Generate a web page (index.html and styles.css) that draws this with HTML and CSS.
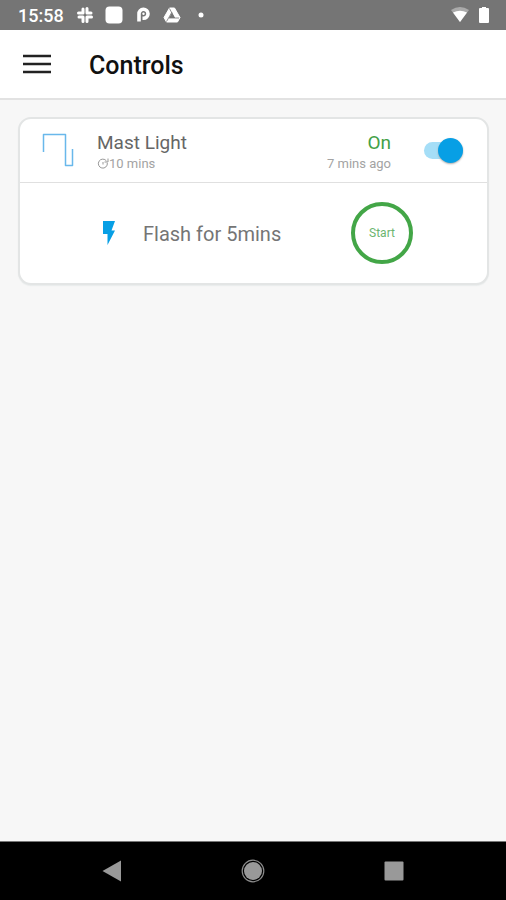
FILE: index.html
```html
<!DOCTYPE html>
<html lang="en">
<head>
<meta charset="utf-8">
<meta name="viewport" content="width=device-width, initial-scale=1">
<title>Controls</title>
<link rel="stylesheet" href="styles.css">
</head>
<body>
<div class="status-bar">
  <time class="clock">15:58</time>
  <div class="notifications">
    <svg width="18" height="18" viewBox="0 0 18 18" fill="none" stroke="#fff" stroke-width="3" stroke-linecap="round"><path d="M7 3v4M2.500 7H7M11 2.500V7M11 7h4M11 11v4.500M11 11h4.500M7 11v4.500M3 11h4"/></svg>
    <svg width="18" height="18" viewBox="0 0 18 18" fill="#fff"><rect x="0.500" y="0.500" width="17" height="17" rx="4"/></svg>
    <svg width="18" height="18" viewBox="0 0 18 18"><path d="M5 15.500V8a4.500 4.500 0 1 1 4.500 4.300H8.500" fill="none" stroke="#fff" stroke-width="3.600"/><circle cx="9.500" cy="7.800" r="1.200" fill="#fff"/></svg>
    <svg width="18" height="18" viewBox="0 0 18 18"><path fill="#fff" stroke="#fff" stroke-linejoin="round" d="M6.500 2h5L17 11.500 14.500 16h-11L1 11.500z"/><path d="M9 6.500 6 12h6z" fill="#757575"/><path d="M6.500 2.500 11.500 12M3.500 15.500 9 6M6 12h10" stroke="#757575" stroke-width="0.800" fill="none"/></svg>
    <svg width="18" height="18" viewBox="0 0 18 18" fill="#fff"><circle cx="9" cy="9" r="2.500"/></svg>
  </div>
  <div class="system">
    <svg width="18" height="16" viewBox="0 0 18 16"><path d="M0 3Q9-3 18 3L9 15z" fill="#aaa"/><path d="M2 5.500Q9 2 16 5.500L9 15z" fill="#fff"/></svg>
    <svg width="12" height="18" viewBox="0 0 12 18" fill="#fff"><path d="M4 1h4v1h2q1 0 1 1v13q0 1-1 1H2q-1 0-1-1V3q0-1 1-1h2z"/></svg>
  </div>
</div>
<header class="app-bar">
  <button class="menu" type="button" aria-label="Menu">
    <svg width="28" height="20" viewBox="0 0 28 20" stroke="#222" stroke-width="2.500"><path d="M0 2h28M0 10h28M0 18h28"/></svg>
  </button>
  <h1 class="title">Controls</h1>
</header>
<main class="content">
  <section class="card">
    <div class="device">
      <svg class="wave" width="32" height="36" viewBox="0 0 32 36" fill="none" stroke="#69b8eb" stroke-width="1.500" stroke-linejoin="round"><path d="M1.500 19V1.500h22v31H30.500V16"/></svg>
      <div class="info">
        <label class="name" for="mast">Mast Light</label>
        <div class="detail">
          <svg width="12" height="12" viewBox="0 0 12 12" fill="none" stroke="#999"><path d="M9.500 3A4.500 4.500 0 1 0 10.300 5M11 0.500v3.500H7.500M6 4v2.500"/></svg>
          <span>10 mins</span>
        </div>
      </div>
      <div class="state">
        <div class="on">On</div>
        <div class="detail">7 mins ago</div>
      </div>
      <input class="switch" id="mast" type="checkbox" role="switch" checked>
    </div>
    <div class="action">
      <svg class="bolt" width="14" height="24" viewBox="0 0 14 24" fill="#079fe5"><path d="M1 0h12L9.500 9.500H13L5.500 24V13H1z"/></svg>
      <div class="action-name">Flash for 5mins</div>
      <button class="start" type="button">Start</button>
    </div>
  </section>
</main>
<nav class="nav-bar">
  <button type="button" aria-label="Back"><svg width="20" height="22" viewBox="0 0 20 22" fill="#999"><path d="M0.500 11 19 0.500v21z"/></svg></button>
  <button type="button" aria-label="Home"><svg width="24" height="24" viewBox="0 0 24 24" fill="#999"><circle cx="12" cy="12" r="9"/><circle cx="12" cy="12" r="10.800" fill="none" stroke="#8c8c8c" stroke-width="1.200"/></svg></button>
  <button type="button" aria-label="Recent apps"><svg width="20" height="20" viewBox="0 0 20 20" fill="#999"><rect x="0.500" y="0.500" width="19" height="19" rx="1"/></svg></button>
</nav>
</body>
</html>
```
FILE: styles.css
```css
* { box-sizing: border-box; }

body {
  margin: 0;
  min-height: 100vh;
  display: flex;
  flex-direction: column;
  background: #f7f7f7;
  font-family: Roboto, "Liberation Sans", sans-serif;
}

svg { display: block; flex: none; }

button {
  padding: 0;
  border: 0;
  background: none;
  font-family: inherit;
}

.status-bar {
  display: flex;
  align-items: center;
  height: 30px;
  padding: 0 16px 0 18px;
  background: #757575;
  color: #fff;
}

.clock {
  width: 58px;
  font-size: 18px;
  font-weight: 500;
}

.notifications {
  display: flex;
  gap: 11px;
}

.system {
  display: flex;
  align-items: center;
  gap: 9px;
  margin-left: auto;
}

.app-bar {
  display: flex;
  align-items: center;
  gap: 38px;
  height: 70px;
  padding: 0 23px;
  border-bottom: 2px solid #e2e2e2;
  background: #fff;
}

.title {
  margin: 0;
  padding-top: 2px;
  font-size: 25px;
  font-weight: 500;
  color: #111;
}

.content {
  flex: 1;
  padding: 17px 17px 17px 18px;
}

.card {
  border: 2px solid #e3e5e5;
  border-radius: 13px;
  background: #fff;
  box-shadow: 0 1px 1px #e8ebeb;
}

.device {
  display: flex;
  align-items: center;
  height: 64px;
  padding: 0 24px 0 22px;
  border-bottom: 1px solid #e0e0e0;
}

.info { margin-left: 23px; }

.info,
.state { padding-top: 2px; }

.name,
.on {
  display: block;
  font-size: 19px;
  line-height: 24px;
}

.name { color: #666; }
.on { color: #43a047; }

.detail {
  display: flex;
  align-items: center;
  justify-content: flex-end;
  font-size: 13px;
  line-height: 18px;
  color: #a3a3a3;
}

.info .detail { justify-content: flex-start; }

.state {
  margin-left: auto;
  text-align: right;
}

.switch {
  appearance: none;
  display: flex;
  align-items: center;
  justify-content: flex-end;
  width: 39px;
  height: 17px;
  margin: 0 0 0 33px;
  border-radius: 9px;
  background: #a5def7;
}

.switch::before {
  content: "";
  width: 25px;
  height: 25px;
  flex: none;
  border-radius: 50%;
  background: #079fe5;
  box-shadow: 0 1px 2px #aaa;
}

.switch:not(:checked) { justify-content: flex-start; }

.action {
  display: flex;
  align-items: center;
  height: 100px;
  padding: 0 74px 0 82px;
}

.action-name {
  margin-left: 27px;
  padding-top: 2px;
  font-size: 20px;
  color: #757575;
}

.start {
  width: 62px;
  height: 62px;
  margin-left: auto;
  border: 4px solid #43a647;
  border-radius: 50%;
  font-size: 12px;
  color: #6cb56f;
}

.nav-bar {
  display: grid;
  grid-template-columns: repeat(3, 1fr);
  height: 59px;
  padding: 0 42px;
  border-top: 1px solid #777;
  background: #000;
}

.nav-bar button {
  display: grid;
  place-items: center;
}
```
